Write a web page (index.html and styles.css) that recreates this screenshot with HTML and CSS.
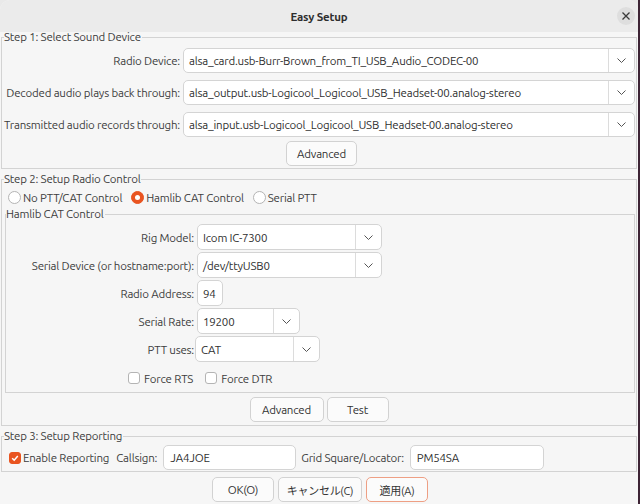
FILE: index.html
```html
<!DOCTYPE html>
<html lang="en">
<head>
<meta charset="utf-8">
<title>Easy Setup</title>
<link rel="stylesheet" href="styles.css">
</head>
<body>
<div class="window">
  <header class="titlebar">
    <span></span>
    <h1 class="title">Easy Setup</h1>
    <span class="close"><svg width="8" height="8" viewBox="0 0 8 8"><path d="M0.5 0.5 L7.5 7.5 M7.5 0.5 L0.5 7.5" stroke="#3a3a3a" stroke-width="1.3" fill="none"/></svg></span>
  </header>
  <main class="content">
    <fieldset class="group step1">
      <legend>Step 1: Select Sound Device</legend>
      <div class="form1">
        <span class="lbl">Radio Device:</span>
        <div class="combo"><span class="val">alsa_card.usb-Burr-Brown_from_TI_USB_Audio_CODEC-00</span><span class="arrow"><svg width="9" height="5" viewBox="0 0 9 5"><path d="M0.5 0.5 L4.5 4.5 L8.5 0.5" stroke="#555" fill="none"/></svg></span></div>
        <span class="lbl">Decoded audio plays back through:</span>
        <div class="combo"><span class="val">alsa_output.usb-Logicool_Logicool_USB_Headset-00.analog-stereo</span><span class="arrow"><svg width="9" height="5" viewBox="0 0 9 5"><path d="M0.5 0.5 L4.5 4.5 L8.5 0.5" stroke="#555" fill="none"/></svg></span></div>
        <span class="lbl">Transmitted audio records through:</span>
        <div class="combo"><span class="val">alsa_input.usb-Logicool_Logicool_USB_Headset-00.analog-stereo</span><span class="arrow"><svg width="9" height="5" viewBox="0 0 9 5"><path d="M0.5 0.5 L4.5 4.5 L8.5 0.5" stroke="#555" fill="none"/></svg></span></div>
      </div>
      <div class="btnrow first"><button class="btn b-adv1">Advanced</button></div>
    </fieldset>

    <fieldset class="group step2">
      <legend>Step 2: Setup Radio Control</legend>
      <div class="radios">
        <span class="radio"><span class="dot"></span>No PTT/CAT Control</span>
        <span class="radio"><span class="dot on"></span>Hamlib CAT Control</span>
        <span class="radio"><span class="dot"></span>Serial PTT</span>
      </div>
      <fieldset class="group hamlib">
        <legend>Hamlib CAT Control</legend>
        <div class="form2">
          <span class="lbl">Rig Model:</span>
          <div class="combo c-rig"><span class="val">Icom IC-7300</span><span class="arrow"><svg width="9" height="5" viewBox="0 0 9 5"><path d="M0.5 0.5 L4.5 4.5 L8.5 0.5" stroke="#555" fill="none"/></svg></span></div>
          <span class="lbl">Serial Device (or hostname:port):</span>
          <div class="combo c-rig"><span class="val">/dev/ttyUSB0</span><span class="arrow"><svg width="9" height="5" viewBox="0 0 9 5"><path d="M0.5 0.5 L4.5 4.5 L8.5 0.5" stroke="#555" fill="none"/></svg></span></div>
          <span class="lbl">Radio Address:</span>
          <div class="field f-addr">94</div>
          <span class="lbl">Serial Rate:</span>
          <div class="combo c-rate"><span class="val">19200</span><span class="arrow"><svg width="9" height="5" viewBox="0 0 9 5"><path d="M0.5 0.5 L4.5 4.5 L8.5 0.5" stroke="#555" fill="none"/></svg></span></div>
          <span class="lbl">PTT uses:</span>
          <div class="combo c-ptt"><span class="val">CAT</span><span class="arrow"><svg width="9" height="5" viewBox="0 0 9 5"><path d="M0.5 0.5 L4.5 4.5 L8.5 0.5" stroke="#555" fill="none"/></svg></span></div>
        </div>
        <div class="checks">
          <span class="check"><span class="box"></span>Force RTS</span>
          <span class="check"><span class="box"></span>Force DTR</span>
        </div>
      </fieldset>
      <div class="btnrow second">
        <button class="btn b-adv2">Advanced</button>
        <button class="btn b-test">Test</button>
      </div>
    </fieldset>

    <fieldset class="group step3">
      <legend>Step 3: Setup Reporting</legend>
      <div class="report">
        <span class="check"><span class="box on"><svg width="10" height="10" viewBox="0 0 10 10"><path d="M2.2 5.2 L4.2 7.2 L7.8 3" stroke="#fff" stroke-width="1.5" fill="none"/></svg></span>Enable Reporting</span>
        <span class="lbl-call">Callsign:</span>
        <div class="field f-call">JA4JOE</div>
        <span class="lbl-grid">Grid Square/Locator:</span>
        <div class="field f-grid">PM54SA</div>
      </div>
    </fieldset>

    <div class="dialog-buttons">
      <button class="btn b-ok">OK(O)</button>
      <button class="btn b-cancel">キャンセル(C)</button>
      <button class="btn b-apply">適用(A)</button>
    </div>
  </main>
</div>
</body>
</html>
```

FILE: styles.css
```css
* { box-sizing: border-box; }
html, body { margin: 0; height: 100%; }
body {
  background: linear-gradient(to right, #e9e9e9 638px, #3d2435 638px);
  font-family: "Ubuntu", "Noto Sans", "Noto Sans CJK JP", sans-serif;
  font-size: 11.5px;
  letter-spacing: -0.2px;
  color: #3d3d3d;
  overflow: hidden;
}
.window {
  width: 638px;
  height: 504px;
  background: #f6f6f6;
  border-radius: 10px 10px 0 0;
  overflow: hidden;
}
.titlebar {
  height: 32px;
  background: #ebebeb;
  display: grid;
  grid-template-columns: 1fr auto 1fr;
  align-items: center;
}
.title {
  margin: 0;
  font-size: 11.5px;
  font-weight: bold;
  color: #2e2e2e;
}
.close {
  justify-self: end;
  margin-right: 3px;
  width: 18px;
  height: 18px;
  border-radius: 50%;
  background: #dedede;
  display: flex;
  align-items: center;
  justify-content: center;
}
.content { display: flex; flex-direction: column; }

fieldset.group {
  border: 1px solid #d3d3d3;
  margin: 0 1px;
  padding: 0;
  min-width: 0;
}
fieldset.group legend {
  padding: 0 1px 0 0;
  margin-left: 2px;
  line-height: 10px;
  font-size: 11.5px;
  white-space: nowrap;
}
.lbl { text-align: right; white-space: nowrap; }

.form1 {
  display: grid;
  grid-template-columns: 177px 1fr;
  column-gap: 3px;
  row-gap: 7px;
  align-items: center;
  padding: 6px 1px 0 1px;
}
.combo {
  display: flex;
  height: 25px;
  background: #fff;
  border: 1px solid #d4d4d4;
  border-radius: 5px;
  align-items: stretch;
}
.combo .val {
  flex: 1;
  padding-left: 5px;
  display: flex;
  align-items: center;
  white-space: nowrap;
  overflow: hidden;
  color: #2f2f2f;
}
.combo .arrow {
  width: 26px;
  border-left: 1px solid #dcdcdc;
  display: flex;
  align-items: center;
  justify-content: center;
}
.btnrow {
  display: flex;
  justify-content: center;
  gap: 3px;
  margin-top: 4px;
}
.btnrow.first { padding-left: 5px; padding-bottom: 2px; }
.btnrow.second { padding-bottom: 3px; }
.btn {
  height: 25px;
  border: 1px solid #d2d2d2;
  border-radius: 5px;
  background: #fbfbfb;
  font: inherit;
  letter-spacing: inherit;
  color: #333;
  padding: 0;
}
.b-adv1 { width: 71px; }
.b-adv2 { width: 74px; }
.b-test { width: 62px; }
.b-ok { width: 62px; }
.b-cancel { width: 84px; font-size: 11px; letter-spacing: -0.3px; }
.b-apply { width: 62px; border-color: #ee9f84; font-size: 11px; }

fieldset.step2 { margin-top: 5px; }
.radios {
  display: flex;
  align-items: center;
  height: 14px;
  margin-top: 6px;
  padding-left: 6px;
}
.radio {
  display: flex;
  align-items: center;
  gap: 2px;
  margin-right: 9px;
  white-space: nowrap;
}
.dot {
  width: 13px;
  height: 13px;
  border-radius: 50%;
  border: 1px solid #b4b4b4;
  background: #fff;
  display: flex;
  align-items: center;
  justify-content: center;
}
.dot.on { background: #e95420; border-color: #e95420; }
.dot.on::after {
  content: "";
  width: 5px;
  height: 5px;
  border-radius: 50%;
  background: #fff;
}
fieldset.hamlib { margin: 5px 1px 0 3px; }
fieldset.hamlib legend { margin-left: 0; }
.form2 {
  display: grid;
  grid-template-columns: 188px 1fr;
  column-gap: 3px;
  row-gap: 2px;
  justify-items: start;
  align-items: center;
  padding-top: 5px;
}
.form2 .lbl { justify-self: end; }
.form2 .combo, .form2 .field { height: 26px; }
.c-rig { width: 185px; }
.c-rate { width: 103px; }
.c-ptt { width: 125px; margin-left: -2px; }
.field {
  height: 25px;
  background: #fff;
  border: 1px solid #d4d4d4;
  border-radius: 5px;
  display: flex;
  align-items: center;
  padding-left: 5px;
  color: #2f2f2f;
}
.f-addr { width: 26px; }
.checks {
  display: flex;
  align-items: center;
  height: 14px;
  margin-top: 9px;
  padding-left: 122px;
  padding-bottom: 7px;
  box-sizing: content-box;
  gap: 12px;
}
.check { display: flex; align-items: center; gap: 4px; white-space: nowrap; }
.box {
  width: 12px;
  height: 12px;
  border: 1px solid #b4b4b4;
  border-radius: 3px;
  background: #fff;
  display: flex;
  align-items: center;
  justify-content: center;
}
.box.on { background: #e95420; border-color: #e95420; }

fieldset.step3 { margin-top: 5px; }
.report {
  display: flex;
  align-items: center;
  padding: 4px 0 1px 7px;
}
.report .check { gap: 2px; }
.lbl-call { margin-left: 7px; }
.f-call { width: 133px; margin-left: 6px; padding-left: 6px; }
.lbl-grid { margin-left: 5px; }
.f-grid { width: 134px; margin-left: 6px; padding-left: 6px; }

.dialog-buttons {
  display: flex;
  justify-content: center;
  gap: 4px;
  margin-top: 5px;
  padding-left: 2px;
}
```
